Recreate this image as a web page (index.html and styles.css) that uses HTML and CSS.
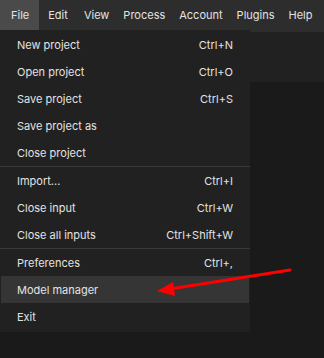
FILE: index.html
```html
<!DOCTYPE html>
<html>
<head>
<meta charset="utf-8">
<link rel="stylesheet" href="styles.css">
</head>
<body>
<div class="app">
  <div class="menubar">
    <span class="mb-item active">File</span>
    <span class="mb-item">Edit</span>
    <span class="mb-item">View</span>
    <span class="mb-item">Process</span>
    <span class="mb-item">Account</span>
    <span class="mb-item">Plugins</span>
    <span class="mb-item">Help</span>
  </div>
  <div class="toolbar"></div>
  <div class="popup">
    <div class="item"><span>New project</span><span class="sc">Ctrl+N</span></div>
    <div class="item"><span>Open project</span><span class="sc">Ctrl+O</span></div>
    <div class="item"><span>Save project</span><span class="sc">Ctrl+S</span></div>
    <div class="item"><span>Save project as</span></div>
    <div class="item"><span>Close project</span></div>
    <div class="sep"></div>
    <div class="item"><span>Import...</span><span class="sc">Ctrl+I</span></div>
    <div class="item"><span>Close input</span><span class="sc">Ctrl+W</span></div>
    <div class="item"><span>Close all inputs</span><span class="sc">Ctrl+Shift+W</span></div>
    <div class="sep"></div>
    <div class="item"><span>Preferences</span><span class="sc">Ctrl+,</span></div>
    <div class="item hl"><span>Model manager</span></div>
    <div class="item"><span>Exit</span></div>
  </div>
  <svg class="arrow" width="324" height="358" viewBox="0 0 324 358">
    <line x1="290" y1="270" x2="170" y2="289" stroke="#ff0000" stroke-width="3" stroke-linecap="round"/>
    <polygon points="157,291 173,282 175,296" fill="#ff0000"/>
  </svg>
</div>
</body>
</html>
```
FILE: styles.css
```css
html, body {
  margin: 0;
  padding: 0;
  background: #1a1a1a;
}
.app {
  position: relative;
  width: 324px;
  height: 358px;
  overflow: hidden;
  font-family: Inter, "Noto Sans", sans-serif;
  font-size: 11px;
  color: #e3e3e3;
}
.menubar {
  height: 32px;
  background: #2d2d2d;
  display: flex;
  align-items: flex-start;
}
.mb-item {
  height: 30px;
  line-height: 30px;
  padding: 0 7px;
  font-size: 11px;
}
.mb-item:first-child {
  padding: 0 10px 0 11px;
}
.mb-item:nth-child(2) {
  padding-left: 9px;
  padding-right: 9px;
}
.mb-item.active {
  background: #4a4a4a;
}
.toolbar {
  height: 50px;
  background: #212121;
}
.popup {
  position: absolute;
  left: 0;
  top: 30px;
  width: 250px;
  padding: 1px 0 2px;
  background: #212121;
}
.item {
  height: 27px;
  display: flex;
  align-items: center;
  justify-content: space-between;
  padding: 0 16px;
  margin: 0 1px;
}
.item.hl {
  background: #353535;
}
.sep {
  height: 1px;
  background: #3a3a3a;
}
.arrow {
  position: absolute;
  left: 0;
  top: 0;
}
```
